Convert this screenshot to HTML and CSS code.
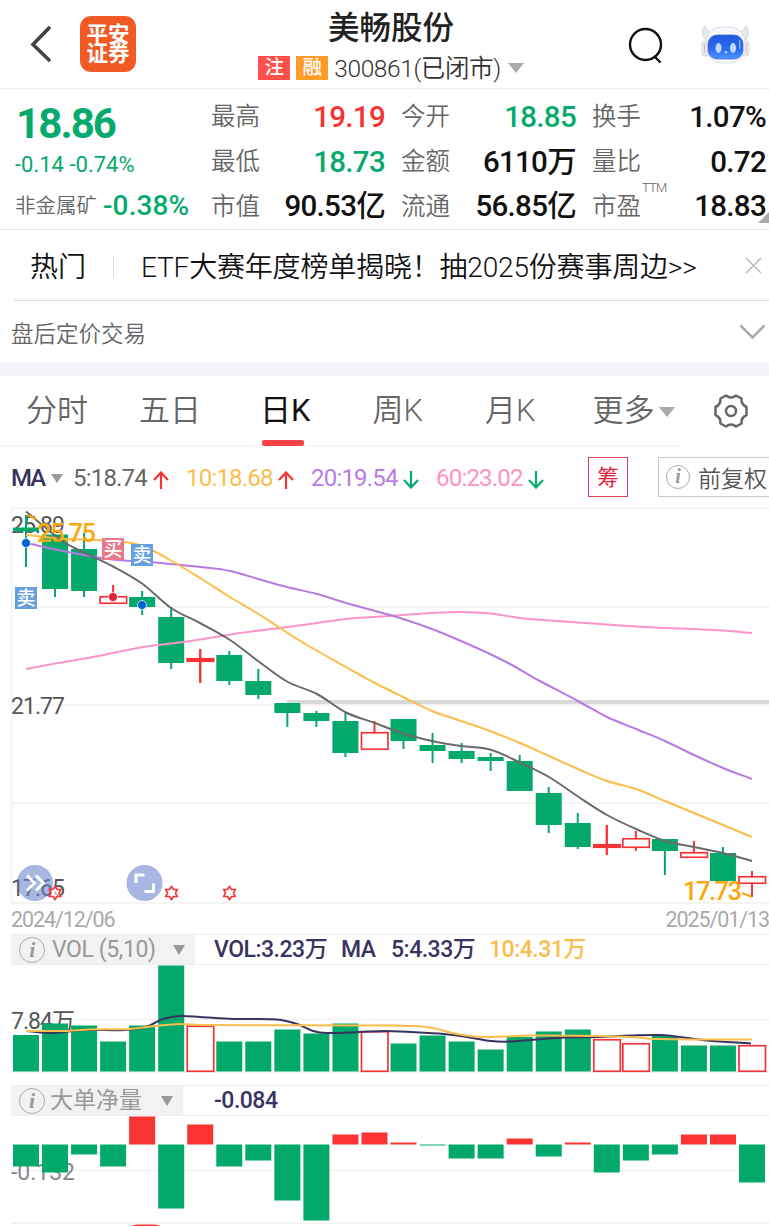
FILE: index.html
```html
<!DOCTYPE html>
<html lang="zh-CN">
<head>
    <meta charset="UTF-8">
    <meta name="viewport" content="width=device-width, initial-scale=1.0">
    <title>美畅股份 300861</title>
    <link rel="stylesheet" href="styles.css">
</head>
<body>
    <header class="header">
        <svg class="back" width="22" height="38" viewBox="0 0 22 38"><path d="M19 3L3 19.500L19 35" /></svg>
        <div class="logo"><span>平安</span><span>证券</span></div>
        <div class="title">
            <h1>美畅股份</h1>
            <div class="subtitle">
                <span class="tag tag-red">注</span>
                <span class="tag tag-orange">融</span>
                <span class="code">300861(已闭市)</span>
                <i class="caret"></i>
            </div>
        </div>
        <svg class="search" width="36" height="38" viewBox="0 0 36 38"><circle cx="17.500" cy="17.500" r="15.500" /><path d="M26 29L32.500 35.500" /></svg>
        <svg class="robot" width="50" height="42" viewBox="0 0 50 42">
            <defs>
                <linearGradient id="face" x1="0" y1="0" x2="0" y2="1">
                    <stop offset="0" stop-color="#2257d8" />
                    <stop offset="0.600" stop-color="#2b6cf3" />
                    <stop offset="1" stop-color="#4f98ff" />
                </linearGradient>
            </defs>
            <path d="M4 2C0 6 1 13 5 16L11 8C6 8 6 4 4 2ZM45 2C49 6 48 13 44 16L38 8C43 8 43 4 45 2Z" fill="#e4e8ee" stroke="#cdd3dc" stroke-width="0.800" />
            <rect x="1" y="17" width="8" height="15" rx="3" fill="#e9e9ee" stroke="#d0d2da" stroke-width="0.800" />
            <rect x="40" y="17" width="8" height="15" rx="3" fill="#e9e9ee" stroke="#d0d2da" stroke-width="0.800" />
            <path d="M3.500 20V29M45.500 20V29" stroke="#e7b9b6" />
            <rect x="5" y="3" width="39" height="36" rx="15" fill="#f5f7fa" stroke="#d5dae2" stroke-width="0.800" />
            <rect x="7" y="11" width="35" height="24" rx="9" fill="url(#face)" stroke="#3d6bd8" stroke-width="0.800" />
            <ellipse cx="17.500" cy="24" rx="3" ry="5" fill="#b9dcff" />
            <ellipse cx="32" cy="24" rx="3" ry="5" fill="#b9dcff" />
            <path d="M24 27.500h2l-1 2zM38.800 16v9" fill="#cfe6ff" stroke="#a8cfff" />
        </svg>
    </header>

    <section class="quote">
        <div class="price">
            <div class="last down">18.86</div>
            <div class="change down">-0.14 -0.74%</div>
            <div class="industry"><span>非金属矿</span><b class="down">-0.38%</b></div>
        </div>
        <dl class="stats">
            <div><dt>最高</dt><dd class="up">19.19</dd></div>
            <div><dt>今开</dt><dd class="down">18.85</dd></div>
            <div><dt>换手</dt><dd>1.07%</dd></div>
            <div><dt>最低</dt><dd class="down">18.73</dd></div>
            <div><dt>金额</dt><dd>6110万</dd></div>
            <div><dt>量比</dt><dd>0.72</dd></div>
            <div><dt>市值</dt><dd>90.53亿</dd></div>
            <div><dt>流通</dt><dd>56.85亿</dd></div>
            <div><dt>市盈<sup>TTM</sup></dt><dd>18.83</dd></div>
        </dl>
        <i class="corner"></i>
    </section>

    <section class="news">
        <span class="hot">热门</span>
        <span class="bar"></span>
        <span class="headline">ETF大赛年度榜单揭晓！抽2025份赛事周边&gt;&gt;</span>
        <svg width="17" height="17" viewBox="0 0 17 17"><path d="M1 1L16 16M16 1L1 16" /></svg>
    </section>

    <section class="after-hours">
        <span>盘后定价交易</span>
        <svg width="27" height="16" viewBox="0 0 27 16"><path d="M1.500 1.500L13.500 13.500L25.500 1.500" /></svg>
    </section>

    <nav class="tabs">
        <a class="tab">分时</a>
        <a class="tab">五日</a>
        <a class="tab active">日K</a>
        <a class="tab">周K</a>
        <a class="tab">月K</a>
        <a class="tab">更多<i class="caret"></i></a>
        <svg class="gear" width="36" height="36" viewBox="0 0 36 36">
            <path d="M13 2.500Q18 6.500 23 2.500L28.500 5.500Q28 11.500 33.500 14V22Q28 24.500 28.500 30.500L23 33.500Q18 29.500 13 33.500L7.500 30.500Q8 24.500 2.500 22V14Q8 11.500 7.500 5.500Z" />
            <circle cx="18" cy="18" r="5" />
        </svg>
    </nav>

    <section class="ma-row">
        <b class="ma">MA</b>
        <i class="caret small"></i>
        <span class="ma5">5:18.74</span>
        <svg class="arrow rise" width="16" height="18" viewBox="0 0 16 18"><path d="M8 18V2M1 9L8 1.500L15 9" /></svg>
        <span class="ma10">10:18.68</span>
        <svg class="arrow rise" width="16" height="18" viewBox="0 0 16 18"><path d="M8 18V2M1 9L8 1.500L15 9" /></svg>
        <span class="ma20">20:19.54</span>
        <svg class="arrow fall" width="16" height="18" viewBox="0 0 16 18"><path d="M8 0V16M1 9L8 16.500L15 9" /></svg>
        <span class="ma60">60:23.02</span>
        <svg class="arrow fall" width="16" height="18" viewBox="0 0 16 18"><path d="M8 0V16M1 9L8 16.500L15 9" /></svg>
        <span class="chip">筹</span>
        <span class="adjust"><i class="info">i</i>前复权</span>
    </section>

    <svg class="chart" width="769" height="398" viewBox="0 506 769 398">
        <path class="grid" d="M11.500 904V508.500H769M11 607H769M11 705H769M11 803H769M11 903H769" />
        <path class="level" d="M287 702H769" />
        <text class="axis" x="11" y="533" textLength="54">25.89</text>
        <text class="axis" x="11" y="714" textLength="54">21.77</text>
        <text class="axis" x="11" y="895.500" textLength="54">17.65</text>
        <g id="candles"></g>
        <g id="lines"></g>
        <text class="peak" x="37" y="541.500" textLength="59">25.75</text>
        <path class="leader" d="M27 515L36 519M742 893L752 897" />
        <text class="peak" x="683" y="900" textLength="59">17.73</text>
        <g class="trade">
            <rect class="buy" x="102" y="538" width="22" height="22" /><text x="113" y="556">买</text>
            <rect class="sell" x="131" y="544" width="22" height="22" /><text x="142" y="562">卖</text>
            <rect class="sell" x="15" y="587" width="22" height="22" /><text x="26" y="605">卖</text>
            <circle class="sell-dot" cx="26" cy="543" r="4.500" />
            <circle class="buy-dot" cx="113" cy="597" r="4.500" />
            <circle class="sell-dot" cx="142" cy="605" r="4.500" />
        </g>
        <g class="tools">
            <circle cx="35" cy="883" r="18" />
            <path d="M27 875.500L34.500 883L27 890.500M36 875.500L43.500 883L36 890.500" />
            <circle cx="144.500" cy="883" r="18" />
            <path d="M136 883V875H144.500M153.500 883.500V891.500H144.500" />
        </g>
        <g id="stars"></g>
    </svg>
    <div class="dates"><span>2024/12/06</span><span>2025/01/13</span></div>

    <div class="panel-head">
        <div class="picker vol"><i class="info">i</i><span>VOL (5,10)</span><i class="caret"></i></div>
        <span class="vol-now">VOL:3.23万</span>
        <span class="vol-ma">MA</span>
        <span class="vol-5">5:4.33万</span>
        <span class="vol-10">10:4.31万</span>
    </div>
    <svg class="chart" width="769" height="120" viewBox="0 965 769 120">
        <path class="grid" d="M11 1019.500H769M11 1072H769" />
        <text class="axis" x="11" y="1028.500" textLength="64">7.84万</text>
        <g id="volume"></g>
        <g id="volumeLines"></g>
    </svg>

    <div class="panel-head">
        <div class="picker net"><i class="info">i</i><span>大单净量</span><i class="caret"></i></div>
        <span class="net-now">-0.084</span>
    </div>
    <svg class="chart" width="769" height="111" viewBox="0 1116 769 111">
        <path class="grid" d="M11 1170.500H769M11 1223.500H769" />
        <text class="axis light" x="11" y="1180" textLength="64">-0.132</text>
        <g id="net"></g>
        <path d="M131 1226Q134 1224.500 138 1224.500H154Q158 1224.500 160 1226Z" fill="#f93232" />
    </svg>

    <script src="script.js"></script>
</body>
</html>
```
FILE: styles.css
```css
body {
    margin: 0;
    width: 769px;
    height: 1227px;
    overflow: hidden;
    background-color: #fff;
    color: #111;
    font-family: Roboto, "Noto Sans CJK SC", sans-serif;
}
h1, dl, dd {
    margin: 0;
}
svg {
    display: block;
    flex: none;
    fill: none;
}
.up {
    color: #f93232;
}
.down {
    color: #05aa6c;
}
.caret {
    flex: none;
    border: 8px solid transparent;
    border-top: 10px solid #aaa;
    border-bottom: 0;
}

/* header */
.header {
    display: flex;
    align-items: center;
    box-sizing: border-box;
    height: 89px;
    border-bottom: 1px solid #eee;
}
.back {
    margin: 0 28px 0 30px;
    stroke: #444;
    stroke-width: 3.6;
    stroke-linecap: round;
}
.logo {
    display: flex;
    flex-direction: column;
    align-items: center;
    justify-content: center;
    width: 56px;
    height: 56px;
    border-radius: 11px;
    background-color: #f15a22;
    color: #fff;
    font-size: 21.500px;
    font-weight: 700;
    line-height: 19px;
}
.title {
    width: 470px;
    padding-left: 20px;
    height: 86px;
    text-align: center;
}
.title h1 {
    height: 53px;
    font-size: 31.500px;
    font-weight: 500;
    line-height: 55px;
    color: #222;
}
.subtitle {
    display: flex;
    align-items: center;
    justify-content: center;
    height: 28px;
}
.tag {
    width: 32px;
    height: 24px;
    margin-right: 6px;
    color: #fff;
    font-size: 19.500px;
    font-weight: 500;
    line-height: 24px;
}
.tag-red {
    background-color: #ff504b;
}
.tag-orange {
    background-color: #ff9c28;
}
.code {
    margin: 2px 7px 0 0;
    color: #333;
    font-size: 24.500px;
    font-weight: 350;
    line-height: 26px;
    letter-spacing: -0.4px;
}
.search {
    margin: 3px 37px 0 2px;
    stroke: #111;
    stroke-width: 2.4;
}
.robot {
    margin-top: 2px;
}

/* quote */
.quote {
    position: relative;
    display: flex;
    box-sizing: border-box;
    height: 141px;
    border-bottom: 1px solid #e6e6e6;
}
.price {
    width: 196px;
    padding-left: 15px;
}
.last {
    height: 58px;
    padding-left: 1px;
    font-size: 42px;
    font-weight: 700;
    line-height: 69px;
    letter-spacing: -1.9px;
}
.change {
    height: 36px;
    font-size: 22px;
    line-height: 36px;
}
.industry {
    display: flex;
    align-items: center;
    height: 46px;
    color: #666;
    font-size: 20.500px;
    font-weight: 350;
    line-height: 28px;
}
.industry b {
    margin-left: 6px;
    font-size: 28px;
    font-weight: 500;
    letter-spacing: 0.1px;
}
.stats {
    display: grid;
    grid-template-columns: 175px 176px 175px;
    grid-template-rows: 46px 44px 45px;
    column-gap: 15px;
    padding-top: 4px;
}
.stats div {
    display: flex;
    align-items: center;
    justify-content: space-between;
}
.stats dt {
    position: relative;
    margin-top: 2px;
    color: #666;
    font-size: 24.500px;
    font-weight: 350;
    line-height: 30px;
}
.stats dd {
    margin: 1px 1px 0 0;
    font-size: 29.500px;
    font-weight: 500;
    line-height: 30px;
    letter-spacing: -0.7px;
    white-space: nowrap;
}
.stats sup {
    position: absolute;
    left: 50px;
    top: -11px;
    font-size: 13px;
    line-height: 14px;
    letter-spacing: -0.8px;
}
.corner {
    position: absolute;
    right: 0;
    bottom: 6px;
    border-left: 11px solid transparent;
    border-bottom: 11px solid #aaa;
}

/* news */
.news {
    display: flex;
    align-items: center;
    box-sizing: border-box;
    height: 71px;
    margin-left: 14px;
    padding-left: 16px;
    border-bottom: 1px solid #dcdde3;
    font-size: 28px;
    font-weight: 350;
    white-space: nowrap;
}
.news .bar {
    width: 1px;
    height: 22px;
    margin: 4px 27px 0;
    background-color: #ddd;
}
.news .headline {
    width: 604px;
    letter-spacing: -0.18px;
}
.news svg {
    stroke: #bbbccb;
    stroke-width: 1.6;
}
.after-hours {
    display: flex;
    align-items: center;
    justify-content: space-between;
    height: 62px;
    padding: 0 3px 0 11px;
    border-bottom: 13px solid #f2f4f9;
    color: #666;
    font-size: 22.500px;
    font-weight: 350;
}
.after-hours svg {
    stroke: #aaa;
    stroke-width: 2.5;
}

/* period tabs */
.tabs {
    display: flex;
    align-items: center;
    height: 70px;
    padding-left: 26px;
    background: linear-gradient(#f3f3f3, #f3f3f3) 0 69px / 680px 1px no-repeat;
    color: #666;
    font-size: 31px;
    font-weight: 350;
    line-height: 36px;
}
.tab {
    display: flex;
    align-items: center;
    position: relative;
    box-sizing: border-box;
    height: 70px;
    margin-right: 51px;
}
.tab:nth-child(2) {
    margin-right: 59px;
}
.tab:nth-child(3),
.tab:nth-child(4) {
    margin-right: 62px;
}
.tab:nth-child(5) {
    margin-right: 57px;
}
.tab:nth-child(6) {
    margin-right: 38px;
}
.tab .caret {
    margin: 1px 0 0 4px;
}
.tab.active {
    color: #111;
    font-weight: 400;
}
.tab.active::after {
    content: "";
    position: absolute;
    left: 2px;
    bottom: 0;
    width: 42px;
    height: 6px;
    border-radius: 2px;
    background-color: #fb4448;
}
.gear {
    stroke: #666;
    stroke-width: 2.5;
    stroke-linejoin: round;
}

/* moving averages */
.ma-row {
    display: flex;
    align-items: center;
    box-sizing: border-box;
    height: 60px;
    padding: 4px 0 0 11px;
    font-size: 24px;
    white-space: nowrap;
}
.ma-row > * {
    flex: none;
}
.ma {
    width: 40px;
    color: #39335f;
    font-weight: 500;
    letter-spacing: -2px;
}
.caret.small {
    margin-right: 10px;
    border-width: 9px 6px 0;
    border-top-color: #999;
}
.ma5 {
    width: 80px;
    color: #666;
}
.ma10,
.ma20,
.ma60 {
    width: 92px;
    margin-left: 17px;
}
.ma10 {
    color: #fabd4e;
}
.ma20 {
    color: #b97be4;
}
.ma60 {
    color: #fd92c6;
}
.ma5, .ma10, .ma20, .ma60 {
    letter-spacing: -0.8px;
}
.arrow {
    margin-top: 3px;
    stroke-width: 2.2;
}
.rise {
    stroke: #f93232;
}
.fall {
    stroke: #05aa6c;
}
.chip {
    box-sizing: border-box;
    width: 40px;
    height: 40px;
    margin: -2px 0 0 44px;
    border: 1px solid #e04058;
    color: #e1203c;
    font-size: 21.500px;
    line-height: 40px;
    text-align: center;
}
.adjust {
    display: flex;
    align-items: center;
    box-sizing: border-box;
    width: 130px;
    height: 40px;
    margin: -2px 0 0 30px;
    padding-left: 7px;
    border: 1px solid #ccc;
    color: #555;
    font-size: 23px;
    font-weight: 350;
}
.info {
    flex: none;
    box-sizing: border-box;
    width: 24px;
    height: 24px;
    margin-right: 8px;
    border: 1px solid #aaa;
    border-radius: 50%;
    color: #999;
    font: italic 700 20px/21px "Liberation Serif", serif;
    text-align: center;
}

/* charts */
.grid {
    stroke: #f1f1f1;
    stroke-width: 1.3;
}
.level {
    stroke: #d9d9d9;
    stroke-width: 4;
}
.axis {
    fill: #555;
    font-size: 23px;
}
.axis.light {
    fill: #87878f;
}
.peak {
    fill: #faa70f;
    font-size: 25.500px;
    font-weight: 500;
}
.leader {
    stroke: #faa70f;
    stroke-width: 2;
}
.trade text {
    fill: #fff;
    font-size: 19px;
    font-weight: 500;
    text-anchor: middle;
}
.buy {
    fill: #e9788b;
}
.sell {
    fill: #65a0dc;
}
.buy-dot {
    fill: #e0203f;
    stroke: #fff;
    stroke-width: 0.7;
}
.sell-dot {
    fill: #0064d2;
    stroke: #fff;
    stroke-width: 0.7;
}
.tools circle {
    fill: #5e7bc8;
    fill-opacity: 0.55;
}
.tools path {
    stroke: #fff;
    stroke-width: 3;
}
.dates {
    display: flex;
    justify-content: space-between;
    height: 30px;
    padding-left: 11px;
    color: #aaa;
    font-size: 21.500px;
    line-height: 31px;
    letter-spacing: -1.1px;
}
.panel-head {
    display: flex;
    align-items: center;
    box-sizing: border-box;
    height: 31px;
    margin-left: 11px;
    border: solid #eee;
    border-width: 1px 0;
    color: #39335f;
    font-size: 23px;
    line-height: 27px;
    white-space: nowrap;
}
.panel-head > span {
    height: 28px;
    font-weight: 500;
    letter-spacing: -0.5px;
}
.picker {
    display: flex;
    align-items: center;
    box-sizing: border-box;
    height: 29px;
    padding-left: 8px;
    background-color: #f2f2f2;
    color: #999;
}
.picker .info {
    width: 26px;
    height: 26px;
    margin-right: 7px;
    font-size: 22px;
    line-height: 23px;
}
.picker .caret {
    margin-left: auto;
    margin-right: 10px;
    border-width: 10px 6px 0;
    border-top-color: #999;
}
.picker.vol {
    width: 184px;
    margin-right: 19px;
    letter-spacing: -0.4px;
}
.picker.net {
    width: 172px;
    margin-right: 31px;
}
.picker.net .info {
    margin-right: 5px;
}
.vol-now {
    width: 127px;
}
.vol-ma {
    width: 50px;
}
.vol-5 {
    width: 98px;
}
.vol-10 {
    color: #fabd4e;
}
```
FILE: script.js
```javascript
const GREEN = '#02a96b';
const RED = '#f43437';
const STEP = 29.04;
const FIRST = 26;

// [body top, body bottom, high, low, rising]
const candles = [
    [527.5, 531.5, 515, 567], [534.5, 589, 534, 597], [549, 591, 533, 597],
    [596, 604, 585, 604, 1], [597, 607, 591, 615], [617, 663, 607, 669],
    [658, 662, 649, 683, 1], [655, 681, 651, 685], [681, 695, 669, 699],
    [703, 713, 703, 727], [713, 721, 711, 727], [721, 753, 713, 757],
    [732, 750, 721, 750, 1], [719, 741, 719, 749], [745, 751, 733, 763],
    [751, 759, 743, 763], [757, 761, 753, 771], [761, 791, 755, 791],
    [793, 825, 787, 833], [823, 847, 813, 849], [844, 848, 825, 855, 1],
    [838, 848, 831, 851, 1], [839, 851, 839, 875], [852, 858, 841, 858, 1],
    [853, 881, 847, 881], [876, 884, 871, 897, 1]
];

const volumes = [1035, 1023.5, 1025.5, 1041.5, 1025.5, 965.5, 1025.5, 1041.5, 1041.5,
    1029.5, 1033.5, 1023.5, 1031, 1043.5, 1035.5, 1041.5, 1049.5, 1037, 1031.5, 1029.5,
    1039, 1043, 1036, 1045.5, 1045.5, 1045];
const volumeUp = [6, 12, 20, 21, 25];

const net = [1166.5, 1172.5, 1154.5, 1166.5, 1116.5, 1208.5, 1124.5, 1166.5, 1160.5,
    1200.5, 1220.5, 1134.5, 1132.5, 1142.5, 1145.5, 1158.5, 1158.5, 1138.5, 1156.5,
    1142.5, 1172.5, 1160.5, 1154.5, 1134.5, 1134.5, 1182.5];

const averages = [
    ['#fb94c8', [[26, 669], [55, 663.5], [93, 657], [143, 647], [171, 643.5], [200, 639.5], [240, 633], [280, 628], [317, 623], [346, 619], [375, 617], [403, 615], [432, 613], [461, 612], [490, 613.5], [520, 618], [549, 620.5], [578, 622.5], [607, 624.5], [636, 626.5], [665, 628], [694, 629], [723, 630.5], [752, 633]]],
    ['#b67be2', [[26, 543], [63, 551], [95, 557], [117, 560], [142, 561.5], [171, 564], [200, 567], [230, 571], [260, 579.5], [287, 587], [317, 594], [346, 603], [375, 611], [403, 619], [432, 629], [461, 641], [490, 654], [510, 664], [538, 680], [578, 701], [607, 717], [636, 729], [665, 741], [694, 755], [723, 768], [752, 779]]],
    ['#fbbd4c', [[26, 535], [67, 539], [97, 540], [123, 542], [143, 546], [171, 560.5], [200, 578], [230, 597], [260, 615], [280, 628], [307, 645], [346, 667], [375, 683], [403, 697], [432, 711], [461, 721], [490, 731], [520, 743], [549, 756], [578, 769], [607, 781], [636, 789], [665, 801], [694, 813], [723, 825], [752, 837]]],
    ['#6a6a6a', [[26, 511.5], [63, 541.5], [82, 551.5], [113, 566.5], [142, 583.5], [171, 608], [200, 623], [230, 640], [258, 661], [287, 681.5], [317, 694], [346, 712.5], [375, 723], [403, 733.5], [432, 741], [461, 746], [490, 749.5], [520, 762.5], [549, 777], [578, 796.5], [607, 815], [636, 829], [665, 841], [694, 847], [723, 853], [752, 861]]]
];

const volumeAverages = [
    ['#39335f', [[26, 1031], [50, 1033], [84, 1030], [125, 1030], [147, 1026.5], [163, 1019], [180, 1016], [200, 1017], [233, 1019], [277, 1019.5], [297, 1024], [313, 1031], [327, 1033], [360, 1032], [384, 1031], [411, 1032], [444, 1034], [467, 1037], [491, 1041], [511, 1041.5], [541, 1039], [564, 1037.5], [597, 1037], [631, 1035.5], [661, 1035], [684, 1037.5], [707, 1040.5], [751, 1043.5]]],
    ['#fbbd4c', [[26, 1031], [65, 1031], [90, 1029.5], [130, 1029], [150, 1026.5], [165, 1025], [180, 1024], [200, 1025], [384, 1025.5], [427, 1027], [457, 1034], [484, 1037], [531, 1035.5], [597, 1036], [631, 1037], [657, 1039], [752, 1039.5]]]
];

function draw(id, html) {
    document.getElementById(id).innerHTML = html;
}

function solid(i, top, bottom, color) {
    return `<rect x="${FIRST + i * STEP - 13}" y="${top}" width="26" height="${bottom - top}" fill="${color}" />`;
}

function hollow(i, top, bottom) {
    return `<rect x="${FIRST + i * STEP - 13}" y="${top + 0.75}" width="26.500" height="${bottom - top - 1.5}" fill="#fff" stroke="${RED}" stroke-width="1.700" />`;
}

// smooth curve through the points
function curve([color, points]) {
    let d = `M${points[0]}`;
    for (let i = 0; i < points.length - 1; i++) {
        const a = points[Math.max(i - 1, 0)];
        const b = points[i];
        const c = points[i + 1];
        const e = points[Math.min(i + 2, points.length - 1)];
        const third = (c[0] - b[0]) / 3;
        const s1 = (c[1] - a[1]) / (c[0] - a[0]);
        const s2 = (e[1] - b[1]) / (e[0] - b[0]);
        d += `C${b[0] + third} ${b[1] + s1 * third} ${c[0] - third} ${c[1] - s2 * third} ${c}`;
    }
    return `<path d="${d}" stroke="${color}" stroke-width="2" />`;
}

draw('candles', candles.map(([top, bottom, high, low, up], i) => {
    const x = FIRST + i * STEP;
    const wick = `<path d="M${x} ${high}V${low}" stroke="${up ? RED : GREEN}" stroke-width="2" />`;
    return wick + (up ? hollow(i, top, bottom) : solid(i, top, bottom, GREEN))
        + (up && bottom - top < 5 ? `<path d="M${x - 13} ${top + 2}h26M${x} ${high}V${low}" stroke="${RED}" stroke-width="2" />` : '');
}).join(''));
draw('lines', averages.map(curve).join(''));

draw('volume', volumes.map((top, i) =>
    volumeUp.includes(i) ? hollow(i, top, 1072) : solid(i, top, 1071.5, GREEN)).join(''));
draw('volumeLines', volumeAverages.map(curve).join(''));

draw('net', net.map((y, i) => y < 1144.5
    ? solid(i, y, 1144.5, '#f93232')
    : solid(i, 1144.5, y, GREEN)).join(''));

// event markers under the candles
draw('stars', [55, 171.5, 229.5].map(x =>
    `<path transform="translate(${x} 893)" d="M0 -6.500L2 -3.500H5.700L4 0L5.700 3.500H2L0 6.500L-2 3.500H-5.700L-4 0L-5.700 -3.500H-2Z" fill="#fff" fill-opacity="0.6" stroke="${RED}" stroke-width="1.700" />`).join(''));
```
